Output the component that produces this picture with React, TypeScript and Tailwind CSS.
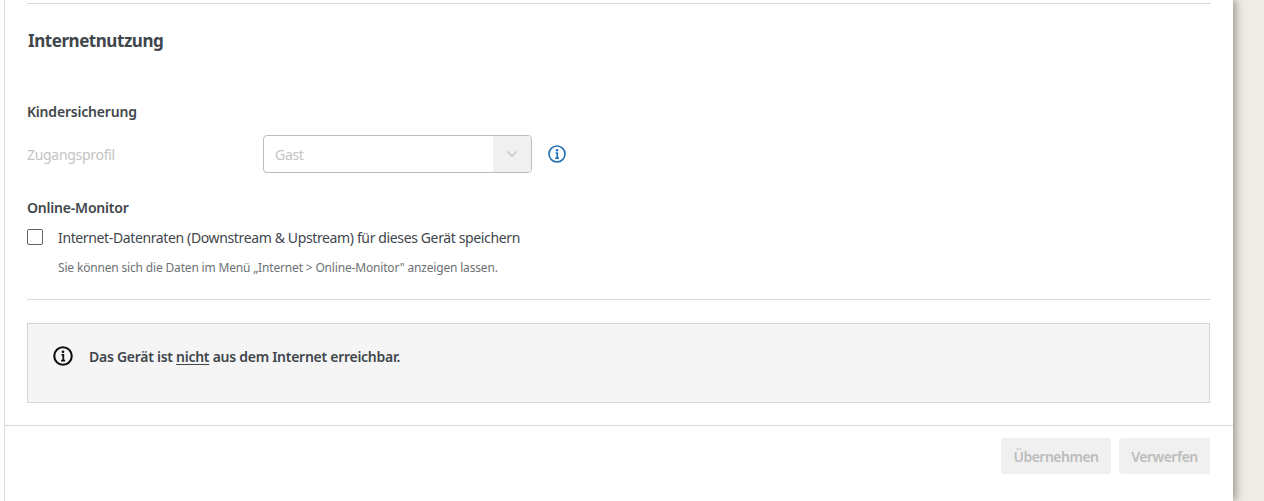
import React from "react";

function InfoIcon({ color, size, sw }: { color: string; size: number; sw: number }) {
  return (
    <svg width={size} height={size} viewBox="0 0 20 20" fill="none" className="shrink-0">
      <circle cx="10" cy="10" r={10 - sw / 2 - 0.2} stroke={color} strokeWidth={sw} />
      <circle cx="10" cy="5.8" r="1.35" fill={color} />
      <path d="M8.5 8.9h1.8v5.3M8.1 14.6h4" stroke={color} strokeWidth="1.8" />
    </svg>
  );
}

export default function App() {
  return (
    <div className="flex h-[501px] w-[1264px] overflow-hidden bg-[#efece6] font-['Source_Sans_Pro','Noto_Sans',sans-serif] text-[#3f464c]">
      <div className="w-[1233px] shrink-0 bg-white pl-1 shadow-[3px_0_8px_rgba(90,85,70,0.55)]">
        <div className="flex h-full flex-col border-l border-[#dcdcdc]">
          <div className="flex-1 pl-[22px] pr-[22px] pt-[3px]">
            <div className="border-t border-[#d9d9d9]" />
            <h2 className="ml-px mt-[25px] text-[17px] font-bold leading-6 tracking-[-0.45px]">Internetnutzung</h2>
            <h3 className="mt-[49px] text-[14px] font-semibold leading-5 tracking-[-0.2px]">Kindersicherung</h3>
            <div className="mt-[13px] flex h-[38px] items-center">
              <span className="w-[236px] text-[14px] tracking-[-0.3px] text-[#c4c4c4]">Zugangsprofil</span>
              <div className="flex h-[38px] w-[269px] overflow-hidden rounded-[4px] border border-[#bdbdbd] bg-white">
                <span className="flex-1 pl-[11px] text-[14px] leading-[37px] tracking-[-0.3px] text-[#c4c4c4]">Gast</span>
                <span className="flex w-[38px] items-center justify-center bg-[#f0f0f0]">
                  <svg width="12" height="8" viewBox="0 0 12 8" fill="none">
                    <path d="M1.5 1.5 6 6l4.5-4.5" stroke="#c2c2c2" strokeWidth="1.3" />
                  </svg>
                </span>
              </div>
              <span className="ml-[16px]"><InfoIcon color="#1f6fb5" size={18} sw={1.8} /></span>
            </div>
            <h3 className="mt-[25px] text-[14px] font-semibold leading-5 tracking-[-0.2px]">Online-Monitor</h3>
            <label className="mt-[9px] flex h-5 items-center">
              <span className="h-4 w-4 rounded-[2px] border border-[#5f6468] bg-white" />
              <span className="ml-[15px] text-[14px] tracking-[-0.37px]">Internet-Datenraten (Downstream &amp; Upstream) für dieses Gerät speichern</span>
            </label>
            <p className="ml-[31px] mt-[13px] text-[12px] leading-4 tracking-[-0.17px] text-[#6d7175]">Sie können sich die Daten im Menü „Internet &gt; Online-Monitor" anzeigen lassen.</p>
            <div className="mt-[23px] border-t border-[#dcdcdc]" />
            <div className="mr-px mt-[23px] flex h-[80px] items-center border border-[#d5d5d5] bg-[#f5f5f5] pb-[14px] pl-[25px]">
              <InfoIcon color="#111111" size={20} sw={2.1} />
              <p className="ml-[16px] text-[14px] font-semibold tracking-[-0.27px]">
                Das Gerät ist <span className="underline underline-offset-2">nicht</span> aus dem Internet erreichbar.
              </p>
            </div>
          </div>
          <div className="flex h-[76px] justify-end gap-2 border-t border-[#d9d9d9] pr-[23px] pt-3">
            <button className="h-9 w-[110px] rounded-[2px] bg-[#f0f0f0] text-[14px] font-semibold tracking-[-0.5px] text-[#bcbcbc]">Übernehmen</button>
            <button className="h-9 w-[91px] rounded-[2px] bg-[#f0f0f0] text-[14px] font-semibold tracking-[-0.5px] text-[#bcbcbc]">Verwerfen</button>
          </div>
        </div>
      </div>
    </div>
  );
}
